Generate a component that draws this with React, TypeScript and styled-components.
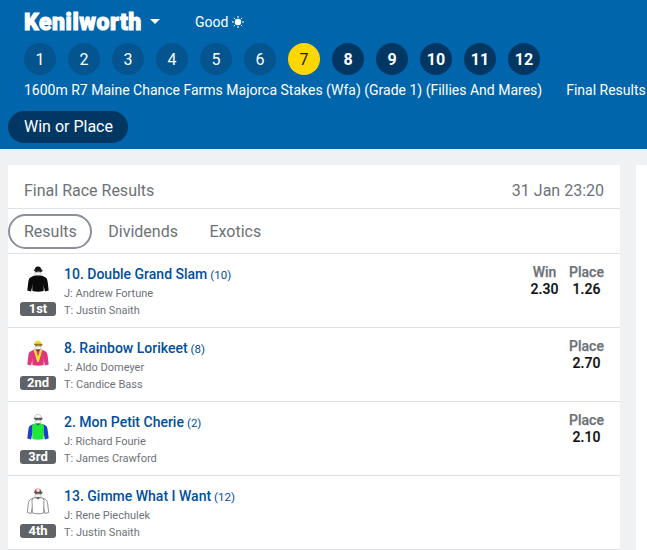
import * as React from 'react'
import styled, { createGlobalStyle } from 'styled-components'

const GlobalStyle = createGlobalStyle`
  html, body {
    margin: 0;
    padding: 0;
    height: 100%;
    overflow: hidden;
    background: #eff1f3;
    font-family: Roboto, "Liberation Sans", sans-serif;
  }
`

const Page = styled.div`
  width: 647px;
  height: 550px;
  overflow: hidden;
`

const Header = styled.header`
  height: 149px;
  background: #0065ab;
  color: #fff;
  overflow: hidden;
`

const TitleRow = styled.div`
  display: flex;
  align-items: center;
  height: 43px;
  padding-left: 24px;
`

const Venue = styled.div`
  font-size: 23px;
  line-height: 24px;
  font-weight: 900;
  letter-spacing: 0.55px;
  -webkit-text-stroke: 1px #fff;
  margin-top: 3px;
`

const Caret = styled.span`
  width: 0;
  height: 0;
  margin-left: 8px;
  margin-top: 0;
  border-left: 5px solid transparent;
  border-right: 5px solid transparent;
  border-top: 5px solid #fff;
`

const Going = styled.div`
  display: flex;
  align-items: center;
  gap: 4px;
  margin-left: 35px;
  margin-top: 1px;
  font-size: 14px;
  line-height: 20px;
`

const RaceRow = styled.div`
  display: flex;
  gap: 12px;
  padding-left: 24px;
`

const RaceButton = styled.div<{ $state: 'done' | 'current' | 'open' }>`
  flex: none;
  width: 32px;
  height: 32px;
  border-radius: 50%;
  display: flex;
  align-items: center;
  justify-content: center;
  font-size: 16px;
  font-weight: ${p => (p.$state === 'open' ? 700 : 400)};
  color: ${p => (p.$state === 'current' ? '#1a1a1a' : '#fff')};
  background: ${p =>
    p.$state === 'current'
      ? '#fed700'
      : p.$state === 'open'
        ? '#033763'
        : '#04548f'};
`

const RaceInfo = styled.div`
  display: flex;
  padding-left: 24px;
  margin-top: 5px;
  height: 20px;
  font-size: 14px;
  line-height: 20px;
  white-space: nowrap;
`

const RaceStatus = styled.span`
  margin-left: 24px;
`

const MarketPill = styled.div`
  display: inline-block;
  margin: 11px 0 0 8px;
  padding: 0 15.500px 0 16px;
  height: 32px;
  line-height: 32px;
  border-radius: 16px;
  background: #033763;
  font-size: 16px;
`

const Body = styled.main`
  display: grid;
  grid-template-columns: 612px 1fr;
  gap: 16px;
  padding: 16px 0 0 8px;
`

const Card = styled.section`
  background: #fff;
  height: 385px;
`

const SidePanel = styled.aside`
  background: #fff;
  height: 385px;
`

const CardHead = styled.div`
  display: flex;
  justify-content: space-between;
  align-items: center;
  height: 44px;
  padding: 12px 16px 4px;
  box-sizing: border-box;
  border-bottom: 1px solid #dfe1e4;
  color: #6d7278;
  font-size: 16px;
`

const RaceTime = styled.span`
  font-size: 16px;
`

const Tabs = styled.nav`
  display: flex;
  align-items: center;
  height: 45px;
  box-sizing: border-box;
  border-bottom: 1px solid #dfe1e4;
`

const Tab = styled.div<{ $active?: boolean }>`
  box-sizing: border-box;
  height: 35px;
  line-height: 31px;
  padding: 0 13.500px 0 14px;
  border-radius: 18px;
  border: 2px solid ${p => (p.$active ? '#8a8f9a' : 'transparent')};
  color: #6d7278;
  font-size: 16px;
`

const Row = styled.article`
  display: flex;
  height: 74px;
  box-sizing: border-box;
  border-bottom: 1px solid #dfe1e4;
  padding: 10px 16px 0 12px;
`

const SilkColumn = styled.div`
  flex: none;
  width: 36px;
  display: flex;
  flex-direction: column;
  align-items: center;
`

const Silk = styled.svg`
  display: block;
  width: 28px;
  height: 30px;
  margin-top: 1px;
`

const PlaceBadge = styled.div`
  margin-top: 7px;
  width: 36px;
  height: 14px;
  line-height: 14px;
  border-radius: 3px;
  background: #5f6368;
  color: #fff;
  font-size: 13px;
  font-weight: 700;
  text-align: center;
`

const Runner = styled.div`
  flex: 1;
  margin-left: 8px;
`

const RunnerName = styled.div`
  display: flex;
  align-items: baseline;
  gap: 3px;
  height: 20px;
  line-height: 20px;
  color: #004f9e;
  font-size: 14px;
  font-weight: 500;
`

const Barrier = styled.span`
  font-size: 11.500px;
  font-weight: 400;
`

const Person = styled.div`
  margin-top: 2px;
  height: 15px;
  line-height: 15px;
  color: #6d7278;
  font-size: 11px;

  & + & {
    margin-top: 2px;
  }
`

const Odds = styled.div`
  display: flex;
  gap: 7px;
`

const OddsColumn = styled.div`
  text-align: center;
  min-width: 35px;
  margin-top: 0;
`

const OddsLabel = styled.div`
  height: 17px;
  line-height: 17px;
  color: #6d7278;
  font-size: 14px;
  font-weight: 500;
  -webkit-text-stroke: 0.25px #6d7278;
`

const OddsValue = styled.div`
  height: 16px;
  line-height: 16px;
  color: #111;
  font-size: 14px;
  font-weight: 500;
  letter-spacing: 0.1px;
  -webkit-text-stroke: 0.2px #111;
`

const Sun = (): JSX.Element => (
  <svg width="12" height="12" viewBox="0 0 12 12" stroke="#fff" strokeWidth="1">
    <circle cx="6" cy="6" r="3.2" fill="#fff" stroke="none" />
    <path d="M6 0v2M6 10v2M0 6h2M10 6h2M1.8 1.8l1.4 1.4M8.8 8.8l1.4 1.4M1.8 10.2l1.4-1.4M8.8 3.2l1.4-1.4" />
  </svg>
)

interface SilkColors {
  cap: string
  capBand?: string
  goggles?: string
  body: string
  sleeve: string
  chevron?: string
  outline?: string
}

const JockeySilk = ({ colors }: { colors: SilkColors }): JSX.Element => {
  const line = colors.outline || 'none'
  return (
    <Silk viewBox="0 0 28 30">
      <path
        d="M10.500 6c0-3.200 1.500-4.500 3.500-4.500s3.500 1.300 3.500 4.500z"
        fill={colors.cap}
        stroke={colors.cap === '#fff' ? '#888' : 'none'}
        strokeWidth="0.5"
      />
      {colors.capBand && <path d="M12.500 1.700h3v4.300h-3z" fill={colors.capBand} />}
      <path d="M11 7.500h6v3h-6z" fill="#f4f4f4" stroke="#888" strokeWidth="0.4" />
      <path d="M9.500 4.800h9v1.300c-1 1.300-2 1.300-3 .7h-2c-1 .6-2 .6-3-.7z" fill={colors.goggles || '#222'} />
      <path
        d="M9.500 11 6.800 12.200C5 13 4.500 15 4.200 18L3.300 25.500l3.800 1 1.900-9z"
        fill={colors.sleeve}
        stroke={line}
        strokeWidth="0.7"
      />
      <path
        d="M18.500 11 21.200 12.200C23 13 23.500 15 23.800 18l.9 7.500-3.800 1-1.900-9z"
        fill={colors.sleeve}
        stroke={line}
        strokeWidth="0.7"
      />
      <path
        d="M9.500 10.800h9l1.500 2.200-.400 13c-3.500 1-7.700 1-11.200 0L8 13z"
        fill={colors.body}
        stroke={line}
        strokeWidth="0.7"
      />
      {colors.chevron && (
        <path d="M9.600 10.800h2.400l2 7 2-7h2.400L14.800 23h-1.600z" fill={colors.chevron} />
      )}
      <path d="M11.500 10.500h5l-2.500 2z" fill="#222" opacity="0.7" />
    </Silk>
  )
}

interface Result {
  place: string
  name: string
  barrier: number
  jockey: string
  trainer: string
  win?: string
  placeDiv?: string
  colors: SilkColors
}

const results: Result[] = [
  {
    place: '1st',
    name: '10. Double Grand Slam',
    barrier: 10,
    jockey: 'Andrew Fortune',
    trainer: 'Justin Snaith',
    win: '2.30',
    placeDiv: '1.26',
    colors: { cap: '#111', body: '#0a0a0a', sleeve: '#0a0a0a' },
  },
  {
    place: '2nd',
    name: '8. Rainbow Lorikeet',
    barrier: 8,
    jockey: 'Aldo Domeyer',
    trainer: 'Candice Bass',
    placeDiv: '2.70',
    colors: { cap: '#f4dc2c', goggles: '#8a7a20', body: '#e0357f', sleeve: '#e0357f', chevron: '#f2e22c' },
  },
  {
    place: '3rd',
    name: '2. Mon Petit Cherie',
    barrier: 2,
    jockey: 'Richard Fourie',
    trainer: 'James Crawford',
    placeDiv: '2.10',
    colors: { cap: '#fff', goggles: '#555', body: '#22e63c', sleeve: '#1c3ed0' },
  },
  {
    place: '4th',
    name: '13. Gimme What I Want',
    barrier: 12,
    jockey: 'Rene Piechulek',
    trainer: 'Justin Snaith',
    colors: { cap: '#d8282c', capBand: '#f4f4f4', goggles: '#555', body: '#fff', sleeve: '#fff', outline: '#666' },
  },
]

const races = Array.from({ length: 12 }, (_, i) => i + 1)

const raceState = (race: number): 'done' | 'current' | 'open' => {
  if (race === 7) return 'current'
  return race < 7 ? 'done' : 'open'
}

export default function App(): JSX.Element {
  return (
    <Page>
      <GlobalStyle />
      <Header>
        <TitleRow>
          <Venue>Kenilworth</Venue>
          <Caret />
          <Going>
            Good <Sun />
          </Going>
        </TitleRow>
        <RaceRow>
          {races.map(race => (
            <RaceButton key={race} $state={raceState(race)}>
              {race}
            </RaceButton>
          ))}
        </RaceRow>
        <RaceInfo>
          1600m R7 Maine Chance Farms Majorca Stakes (Wfa) (Grade 1) (Fillies And Mares)
          <RaceStatus>Final Results</RaceStatus>
        </RaceInfo>
        <MarketPill>Win or Place</MarketPill>
      </Header>
      <Body>
        <Card>
          <CardHead>
            <span>Final Race Results</span>
            <RaceTime>31 Jan 23:20</RaceTime>
          </CardHead>
          <Tabs>
            <Tab $active>Results</Tab>
            <Tab>Dividends</Tab>
            <Tab>Exotics</Tab>
          </Tabs>
          {results.map(result => (
            <Row key={result.name}>
              <SilkColumn>
                <JockeySilk colors={result.colors} />
                <PlaceBadge>{result.place}</PlaceBadge>
              </SilkColumn>
              <Runner>
                <RunnerName>
                  {result.name} <Barrier>({result.barrier})</Barrier>
                </RunnerName>
                <Person>J: {result.jockey}</Person>
                <Person>T: {result.trainer}</Person>
              </Runner>
              <Odds>
                {result.win && (
                  <OddsColumn>
                    <OddsLabel>Win</OddsLabel>
                    <OddsValue>{result.win}</OddsValue>
                  </OddsColumn>
                )}
                {result.placeDiv && (
                  <OddsColumn>
                    <OddsLabel>Place</OddsLabel>
                    <OddsValue>{result.placeDiv}</OddsValue>
                  </OddsColumn>
                )}
              </Odds>
            </Row>
          ))}
        </Card>
        <SidePanel />
      </Body>
    </Page>
  )
}
